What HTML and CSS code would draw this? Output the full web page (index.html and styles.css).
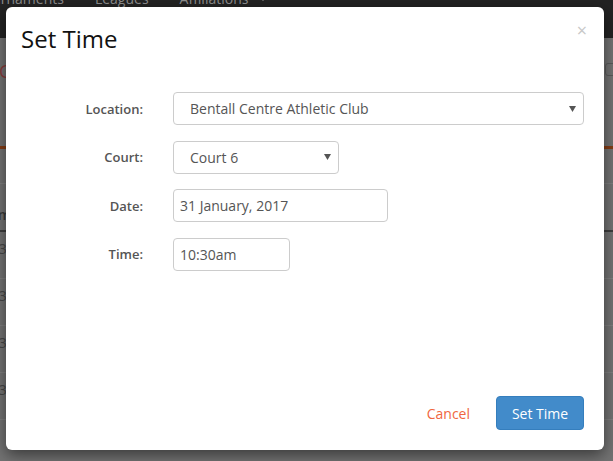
FILE: index.html
```html
<!DOCTYPE html>
<html>
<head>
<meta charset="utf-8">
<link rel="stylesheet" href="styles.css">
</head>
<body>
<div class="page">
  <nav class="nav">
    <span class="nav-item first">Tournaments</span>
    <span class="nav-item">Leagues</span>
    <span class="nav-item">Affiliations <span class="caret"></span></span>
  </nav>
  <div class="toolbar">
    <span class="crumb">Gr</span>
    <span class="tool-box"></span>
  </div>
  <div class="spacer"></div>
  <div class="thead"><span class="cell">Time</span></div>
  <div class="trow"><span class="cell">10:30</span></div>
  <div class="trow"><span class="cell">10:30</span></div>
  <div class="trow"><span class="cell">10:30</span></div>
  <div class="trow"><span class="cell">10:30</span></div>
  <div class="trow"></div>
</div>

<div class="modal">
  <div class="modal-header">
    <h4 class="modal-title">Set Time</h4>
    <span class="close">&times;</span>
  </div>
  <div class="modal-body">
    <div class="form-grid">
      <label class="form-label">Location:</label>
      <div class="field select w-full">
        <span class="field-text">Bentall Centre Athletic Club</span>
        <svg class="arrow" width="7" height="6" viewBox="0 0 7 6"><path d="M0 0H7L3.5 6Z" fill="#555"/></svg>
      </div>

      <label class="form-label">Court:</label>
      <div class="field select w-court">
        <span class="field-text">Court 6</span>
        <svg class="arrow" width="7" height="6" viewBox="0 0 7 6"><path d="M0 0H7L3.5 6Z" fill="#555"/></svg>
      </div>

      <label class="form-label">Date:</label>
      <div class="field input w-date"><span class="field-text">31 January, 2017</span></div>

      <label class="form-label">Time:</label>
      <div class="field input w-time"><span class="field-text">10:30am</span></div>
    </div>
  </div>
  <div class="modal-footer">
    <a class="btn-link">Cancel</a>
    <button class="btn-primary">Set Time</button>
  </div>
</div>
</body>
</html>
```

FILE: styles.css
```css
* { box-sizing: border-box; }
html, body { margin: 0; padding: 0; }
body {
  font-family: "Open Sans", "DejaVu Sans", sans-serif;
  font-size: 14px;
  color: #555;
  width: 613px;
  height: 461px;
  overflow: hidden;
  position: relative;
  background: #737373;
}

.page { width: 613px; }
.nav {
  height: 38px;
  background: #232323;
  display: flex;
  align-items: flex-start;
  overflow: hidden;
}
.nav-item {
  color: #8e8e8e;
  font-size: 14px;
  line-height: 20px;
  margin-top: -11px;
  margin-right: 31px;
  white-space: nowrap;
}
.nav-item.first { margin-left: -24px; }
.caret {
  display: inline-block;
  width: 0; height: 0;
  border-left: 5px solid transparent;
  border-right: 5px solid transparent;
  border-top: 5px solid #8e8e8e;
  margin-left: 6px;
  vertical-align: 3px;
}
.toolbar {
  height: 111px;
  border-bottom: 3px solid #853d15;
  display: flex;
  justify-content: space-between;
  align-items: flex-start;
}
.crumb {
  color: #8a3c3c;
  font-size: 18px;
  line-height: 24px;
  margin-top: 21px;
  margin-left: -1px;
}
.tool-box {
  width: 14px;
  height: 13px;
  margin-top: 25px;
  margin-right: -6px;
  border: 1px solid #5a5a5a;
  border-radius: 3px;
}
.spacer { height: 35px; border-bottom: 1px solid #7f7f7f; }
.thead {
  height: 48px;
  border-bottom: 2px solid #3e3e3e;
  display: flex;
  align-items: flex-end;
}
.trow {
  height: 47px;
  border-bottom: 1px solid #7f7f7f;
  display: flex;
  align-items: flex-start;
  padding-top: 7px;
}
.cell {
  color: #474747;
  font-size: 14px;
  margin-left: -21px;
  line-height: 20px;
}
.thead .cell { margin-left: -14px; margin-bottom: 5px; font-weight: 600; color: #3a3a3a; }

/* modal */
.modal {
  position: absolute;
  left: 6px;
  top: 7px;
  width: 598px;
  height: 443px;
  background: #fff;
  border-radius: 6px;
  box-shadow: 0 5px 15px rgba(0, 0, 0, 0.5);
  display: flex;
  flex-direction: column;
}
.modal-header {
  display: flex;
  justify-content: space-between;
  align-items: flex-start;
  padding: 18px 17px 0 15px;
}
.modal-title {
  margin: 0;
  font-size: 24px;
  line-height: 28px;
  font-weight: 400;
  color: #111;
}
.close {
  color: #c8c8c8;
  font-size: 18px;
  line-height: 20px;
  margin-top: -5px;
}
.modal-body {
  flex: 1;
  padding: 39px 20px 0 15px;
}
.form-grid {
  display: grid;
  grid-template-columns: 122px 1fr;
  column-gap: 30px;
  row-gap: 15.5px;
  align-items: center;
}
.form-label {
  text-align: right;
  font-size: 13px;
  font-weight: 600;
  color: #555;
}
.field {
  height: 33px;
  border: 1px solid #ccc;
  border-radius: 4px;
  display: flex;
  align-items: center;
  justify-content: space-between;
  background: #fff;
}
.field-text { font-size: 14px; color: #555; white-space: nowrap; }
.select { padding: 0 7px 0 16px; }
.input { padding: 0 6px; }
.arrow { display: block; }
.w-full { width: 100%; }
.w-court { width: 166px; }
.w-date { width: 215px; }
.w-time { width: 117px; }

.modal-footer {
  display: flex;
  justify-content: flex-end;
  align-items: center;
  gap: 26px;
  padding: 0 20px 20px;
}
.btn-link {
  color: #f0663e;
  font-size: 14px;
}
.btn-primary {
  width: 88px;
  height: 34px;
  border: 1px solid #357ebd;
  border-radius: 4px;
  background: #428bca;
  color: #fff;
  font-family: "Open Sans", "DejaVu Sans", sans-serif;
  font-size: 14px;
  padding: 0;
}
```
